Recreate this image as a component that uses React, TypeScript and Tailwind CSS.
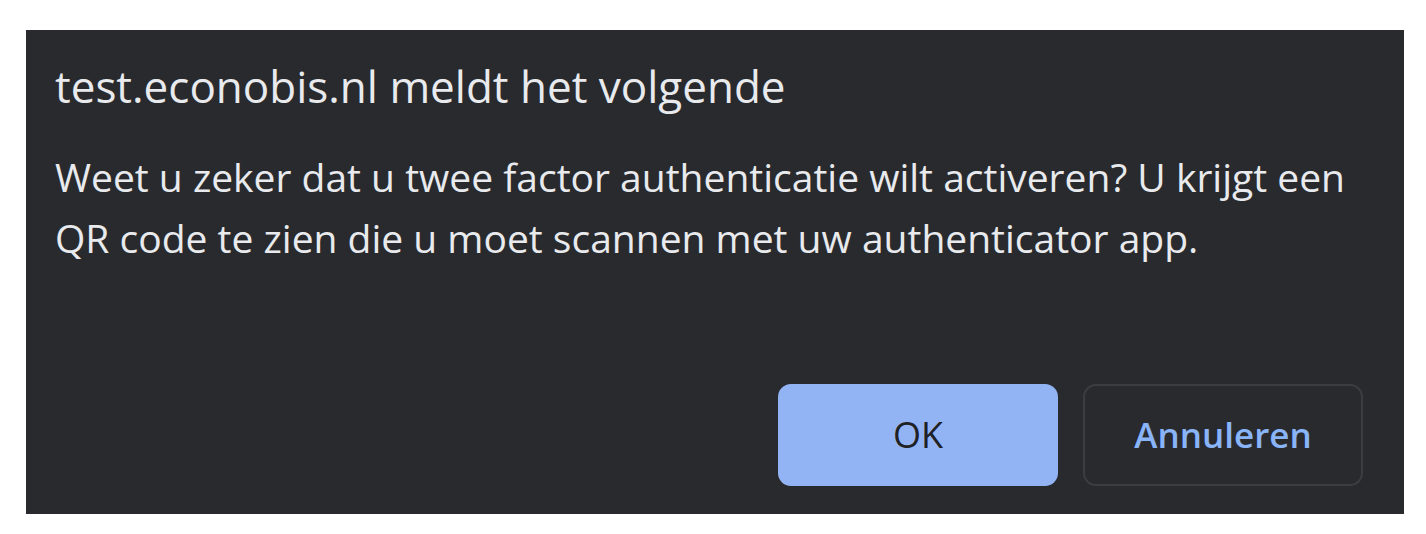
const App = () => {
  return (
    <div className="h-[534px] w-[1426px] bg-white pt-[30px] pl-[26px]">
      <div className="flex h-[484px] w-[1378px] flex-col bg-[#292a2d] pl-[29px] pr-[41px] pb-[28px] font-['Open_Sans',sans-serif] text-[#e8eaed]">
        <h1 className="mt-[30px] text-[44px] leading-[52px]">test.econobis.nl meldt het volgende</h1>
        <p className="mt-[34px] text-[39px] leading-[61px]">
          Weet u zeker dat u twee factor authenticatie wilt activeren? U krijgt een
          <br />
          QR code te zien die u moet scannen met uw authenticator app.
        </p>
        <div className="mt-auto flex justify-end gap-[25px]">
          <button
            type="button"
            className="h-[102px] w-[280px] rounded-[13px] bg-[#93b4f4] text-[36px] text-[#202124]"
          >
            OK
          </button>
          <button
            type="button"
            className="h-[102px] w-[280px] rounded-[13px] border-2 border-[#3c3d41] text-[35px] font-semibold text-[#8ab4f8]"
          >
            Annuleren
          </button>
        </div>
      </div>
    </div>
  );
};

export default App;
